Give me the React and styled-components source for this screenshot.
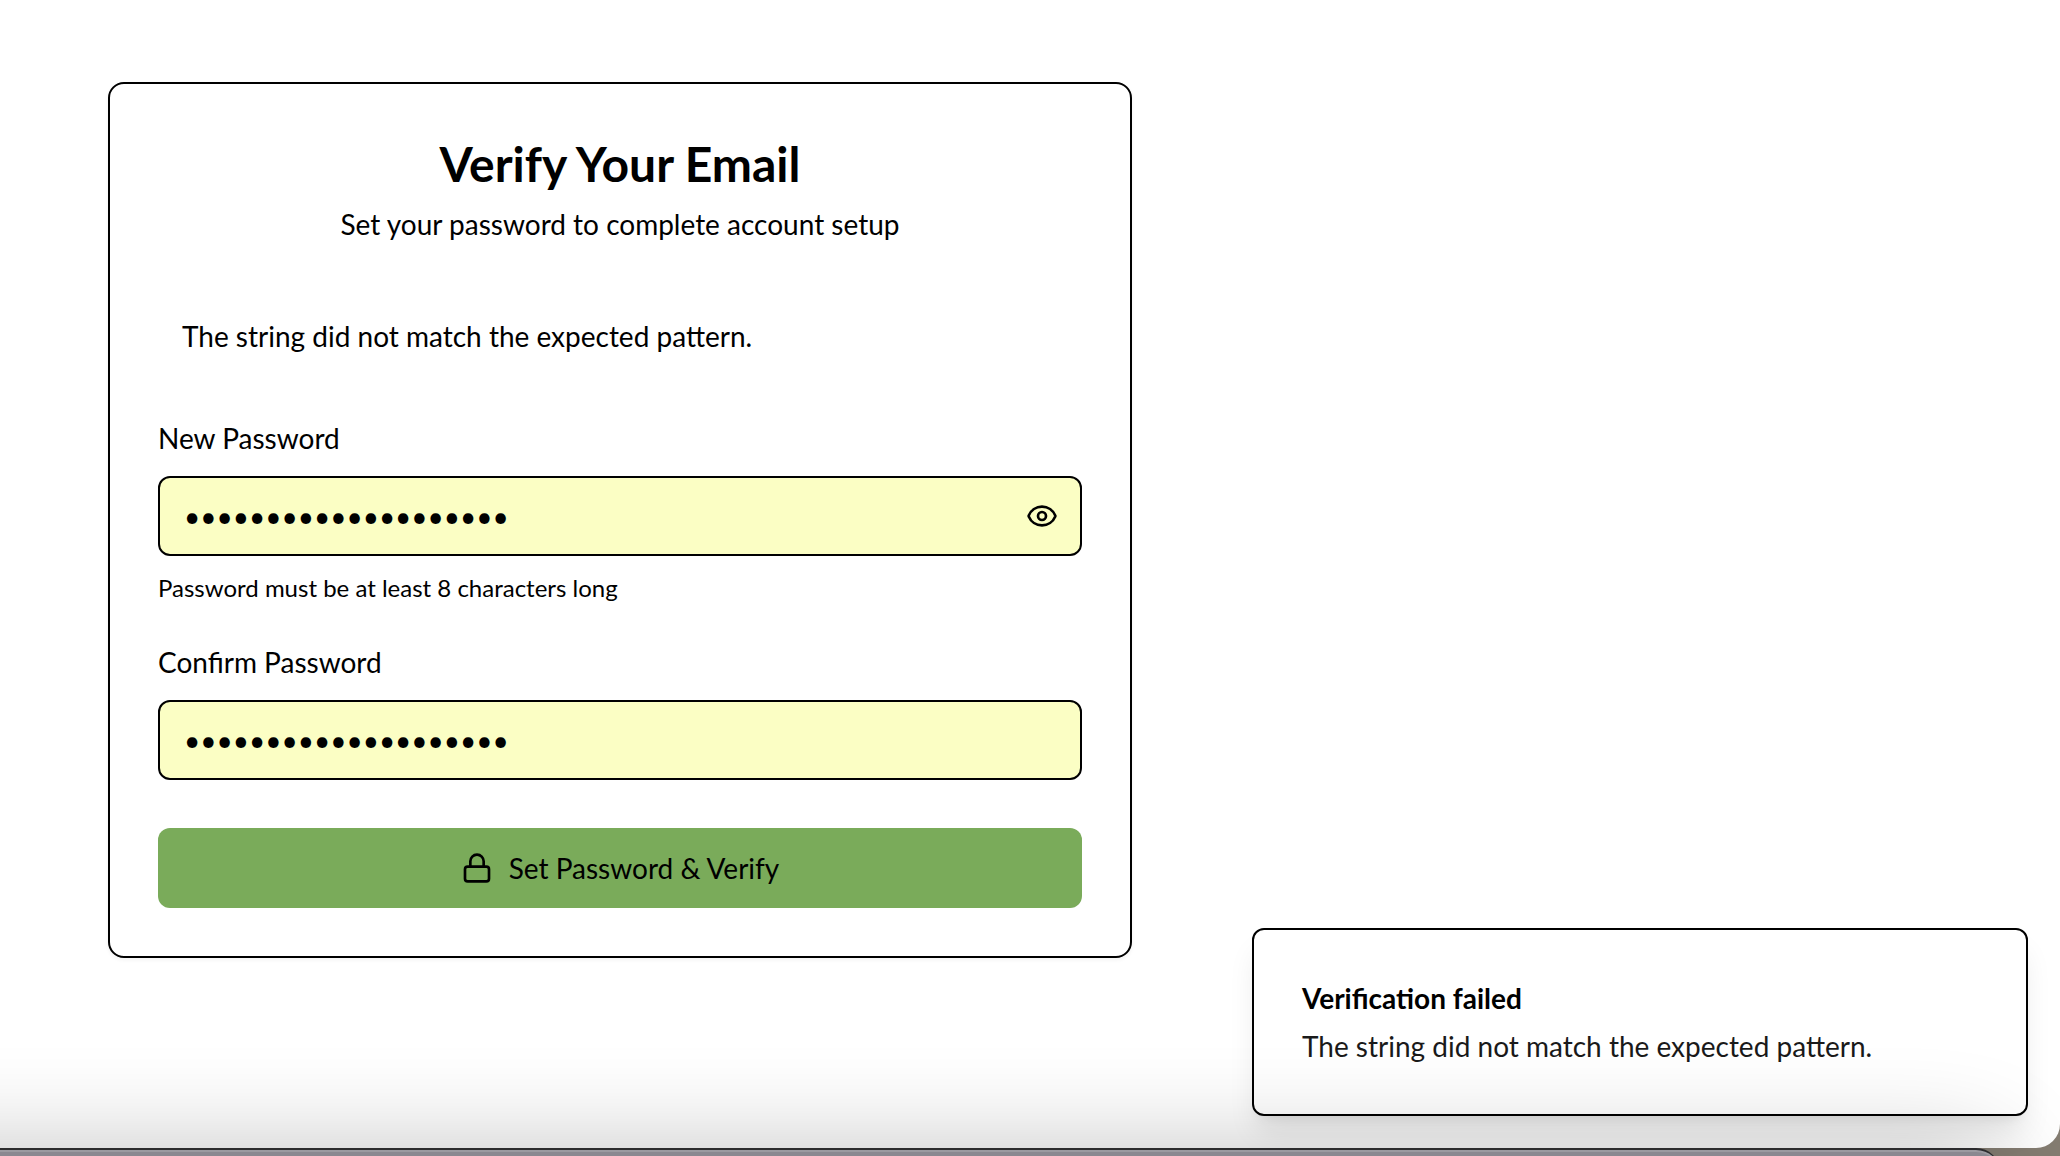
import React, { useState } from "react";
import styled, { createGlobalStyle } from "styled-components";
import { Eye, EyeOff, Lock } from "lucide-react";

const GlobalStyle = createGlobalStyle`
  *, *::before, *::after { box-sizing: border-box; }
  body {
    margin: 0;
    background: #857d72;
    color: #000;
    font-family: Lato, "Liberation Sans", sans-serif;
    font-size: 28px;
    line-height: 40px;
  }
  h1, p { margin: 0; }
`;

const Desktop = styled.div`
  display: flex;
  flex-direction: column;
  min-height: 100vh;
  overflow: hidden;
`;

const Page = styled.main`
  position: relative;
  flex: 1;
  padding: 82px 108px;
  background: #fff;
  border-radius: 0 0 24px 0;
`;

const Card = styled.section`
  display: flex;
  flex-direction: column;
  max-width: 1024px;
  padding: 48px;
  border: 2px solid #000;
  border-radius: 16px;
  background: #fff;
  box-shadow: 0 2px 4px rgba(0, 0, 0, 0.05);
`;

const CardHeader = styled.header`
  display: flex;
  flex-direction: column;
  gap: 8px;
  text-align: center;
`;

const Title = styled.h1`
  font-size: 48px;
  font-weight: 700;
  line-height: 64px;
`;

const Form = styled.form`
  display: flex;
  flex-direction: column;
  gap: 48px;
  margin-top: 48px;
`;

const Alert = styled.p`
  padding: 24px;
`;

const Fields = styled.div`
  display: flex;
  flex-direction: column;
  gap: 44px;
`;

const Field = styled.div`
  display: flex;
  flex-direction: column;
`;

const Label = styled.label`
  margin-bottom: 24px;
  line-height: 28px;
`;

const InputFrame = styled.div`
  position: relative;
  display: flex;
`;

const Input = styled.input`
  width: 100%;
  height: 80px;
  padding: 0 24px;
  border: 2px solid #000;
  border-radius: 12px;
  background: #fbfec4;
  color: #000;
  font: inherit;
`;

const RevealButton = styled.button`
  position: absolute;
  top: 0;
  right: 0;
  display: flex;
  align-items: center;
  height: 100%;
  padding: 0 24px;
  border: 0;
  background: none;
  color: #000;
  cursor: pointer;
`;

const Hint = styled.p`
  margin-top: 16px;
  font-size: 24px;
  line-height: 32px;
`;

const SubmitButton = styled.button`
  display: flex;
  align-items: center;
  justify-content: center;
  gap: 16px;
  height: 80px;
  border: 0;
  border-radius: 12px;
  background: #7aab5a;
  color: #000;
  font: inherit;
  cursor: pointer;
`;

const Toast = styled.aside`
  position: absolute;
  right: 32px;
  bottom: 32px;
  width: 776px;
  padding: 48px;
  border: 2px solid #000;
  border-radius: 12px;
  background: #fff;
  box-shadow: 0 20px 30px -6px rgba(0, 0, 0, 0.1), 0 8px 12px -8px rgba(0, 0, 0, 0.1);
`;

const ToastTitle = styled.p`
  font-weight: 700;
`;

const ToastText = styled.p`
  margin-top: 8px;
  color: #1a1a1a;
`;

/* Only the top edge of this window shows; the rest runs off the desktop. */
const WindowBehind = styled.div`
  position: relative;
  flex: none;
  height: 208px;
  margin: 0 60px -200px -120px;
  border-top: 2px solid #2c2c2e;
  border-radius: 0 24px 0 0;
  background: #8a8890;
  box-shadow: 0 0 100px rgba(0, 0, 0, 0.24), inset 0 2px 0 #9b9aa0;
`;

export default function App() {
  const [visible, setVisible] = useState(false);
  const [password, setPassword] = useState("Tr4verse-Meadow-2024");
  const [confirmation, setConfirmation] = useState("Tr4verse-Meadow-2024");

  return (
    <Desktop>
      <GlobalStyle />
      <Page>
        <Card>
          <CardHeader>
            <Title>Verify Your Email</Title>
            <p>Set your password to complete account setup</p>
          </CardHeader>
          <Form onSubmit={(event) => event.preventDefault()}>
            <Fields>
              <Alert role="alert">The string did not match the expected pattern.</Alert>
              <Field>
                <Label htmlFor="password">New Password</Label>
                <InputFrame>
                  <Input
                    id="password"
                    type={visible ? "text" : "password"}
                    value={password}
                    onChange={(event) => setPassword(event.target.value)}
                    aria-describedby="password-hint"
                  />
                  <RevealButton
                    type="button"
                    aria-label={visible ? "Hide password" : "Show password"}
                    onClick={() => setVisible(!visible)}
                  >
                    {visible ? <EyeOff size={32} /> : <Eye size={32} />}
                  </RevealButton>
                </InputFrame>
                <Hint id="password-hint">Password must be at least 8 characters long</Hint>
              </Field>
              <Field>
                <Label htmlFor="confirmation">Confirm Password</Label>
                <Input
                  id="confirmation"
                  type="password"
                  value={confirmation}
                  onChange={(event) => setConfirmation(event.target.value)}
                />
              </Field>
            </Fields>
            <SubmitButton type="submit">
              <Lock size={32} />
              Set Password &amp; Verify
            </SubmitButton>
          </Form>
        </Card>
        <Toast role="status">
          <ToastTitle>Verification failed</ToastTitle>
          <ToastText>The string did not match the expected pattern.</ToastText>
        </Toast>
      </Page>
      <WindowBehind />
    </Desktop>
  );
}
